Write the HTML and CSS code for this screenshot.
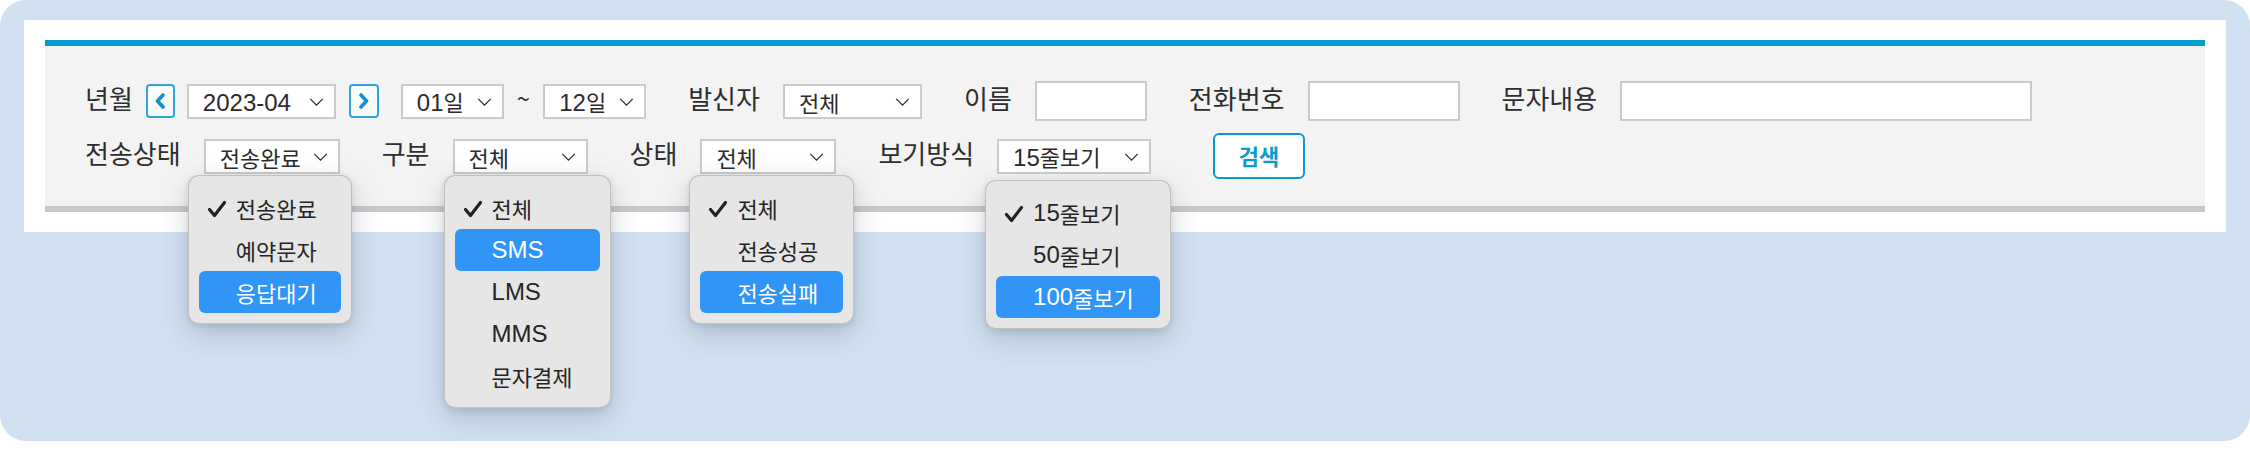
FILE: index.html
```html
<!DOCTYPE html>
<html lang="ko">
<head>
<meta charset="utf-8">
<title>문자 발송 내역 검색</title>
<link rel="stylesheet" href="styles.css">
</head>
<body>
<div class="frame">
  <div class="panel">
    <div class="search-box">
      <div class="row row-1">
        <span class="label label-first">년월</span>
        <button class="nav-btn nav-prev" type="button" aria-label="이전">
          <svg viewBox="0 0 12 16" width="12" height="16"><polyline points="9,2 3.5,8 9,14" fill="none" stroke="#1590c8" stroke-width="3.6" stroke-linecap="round" stroke-linejoin="round"/></svg>
        </button>
        <div class="select w-month"><span><span class="en">2023-04</span></span><svg class="chev" viewBox="0 0 16 9" width="15" height="8"><polyline points="1,1 8,8 15,1" fill="none" stroke="#333" stroke-width="1.5"/></svg></div>
        <button class="nav-btn nav-next" type="button" aria-label="다음">
          <svg viewBox="0 0 12 16" width="12" height="16"><polyline points="3,2 8.5,8 3,14" fill="none" stroke="#1590c8" stroke-width="3.6" stroke-linecap="round" stroke-linejoin="round"/></svg>
        </button>
        <div class="select w-day"><span><span class="en">01</span>일</span><svg class="chev" viewBox="0 0 16 9" width="15" height="8"><polyline points="1,1 8,8 15,1" fill="none" stroke="#333" stroke-width="1.5"/></svg></div>
        <span class="tilde">~</span>
        <div class="select w-day gap"><span><span class="en">12</span>일</span><svg class="chev" viewBox="0 0 16 9" width="15" height="8"><polyline points="1,1 8,8 15,1" fill="none" stroke="#333" stroke-width="1.5"/></svg></div>
        <span class="label">발신자</span>
        <div class="select w-sender gap"><span>전체</span><svg class="chev" viewBox="0 0 16 9" width="15" height="8"><polyline points="1,1 8,8 15,1" fill="none" stroke="#333" stroke-width="1.5"/></svg></div>
        <span class="label">이름</span>
        <div class="input w-name gap"></div>
        <span class="label">전화번호</span>
        <div class="input w-phone gap"></div>
        <span class="label">문자내용</span>
        <div class="input w-content"></div>
      </div>
      <div class="row row-2">
        <span class="label">전송상태</span>
        <div class="select w-status gap">
          <span>전송완료</span><svg class="chev" viewBox="0 0 16 9" width="15" height="8"><polyline points="1,1 8,8 15,1" fill="none" stroke="#333" stroke-width="1.5"/></svg>
          <ul class="menu menu-1">
            <li class="item checked"><svg class="check" viewBox="0 0 20 18" width="20" height="18"><polyline points="2.5,9.5 7.5,15.5 17.5,2.5" fill="none" stroke="#222" stroke-width="3.2" stroke-linecap="round" stroke-linejoin="round"/></svg>전송완료</li>
            <li class="item">예약문자</li>
            <li class="item active">응답대기</li>
          </ul>
        </div>
        <span class="label">구분</span>
        <div class="select w-type gap">
          <span>전체</span><svg class="chev" viewBox="0 0 16 9" width="15" height="8"><polyline points="1,1 8,8 15,1" fill="none" stroke="#333" stroke-width="1.5"/></svg>
          <ul class="menu menu-2">
            <li class="item checked"><svg class="check" viewBox="0 0 20 18" width="20" height="18"><polyline points="2.5,9.5 7.5,15.5 17.5,2.5" fill="none" stroke="#222" stroke-width="3.2" stroke-linecap="round" stroke-linejoin="round"/></svg>전체</li>
            <li class="item active"><span class="en">SMS</span></li>
            <li class="item"><span class="en">LMS</span></li>
            <li class="item"><span class="en">MMS</span></li>
            <li class="item">문자결제</li>
          </ul>
        </div>
        <span class="label">상태</span>
        <div class="select w-state gap">
          <span>전체</span><svg class="chev" viewBox="0 0 16 9" width="15" height="8"><polyline points="1,1 8,8 15,1" fill="none" stroke="#333" stroke-width="1.5"/></svg>
          <ul class="menu menu-3">
            <li class="item checked"><svg class="check" viewBox="0 0 20 18" width="20" height="18"><polyline points="2.5,9.5 7.5,15.5 17.5,2.5" fill="none" stroke="#222" stroke-width="3.2" stroke-linecap="round" stroke-linejoin="round"/></svg>전체</li>
            <li class="item">전송성공</li>
            <li class="item active">전송실패</li>
          </ul>
        </div>
        <span class="label">보기방식</span>
        <div class="select w-view gap-wide">
          <span><span class="en">15</span>줄보기</span><svg class="chev" viewBox="0 0 16 9" width="15" height="8"><polyline points="1,1 8,8 15,1" fill="none" stroke="#333" stroke-width="1.5"/></svg>
          <ul class="menu menu-4">
            <li class="item checked"><svg class="check" viewBox="0 0 20 18" width="20" height="18"><polyline points="2.5,9.5 7.5,15.5 17.5,2.5" fill="none" stroke="#222" stroke-width="3.2" stroke-linecap="round" stroke-linejoin="round"/></svg><span class="en">15</span>줄보기</li>
            <li class="item"><span class="en">50</span>줄보기</li>
            <li class="item active"><span class="en">100</span>줄보기</li>
          </ul>
        </div>
        <button class="search-btn" type="button">검색</button>
      </div>
    </div>
  </div>
</div>
</body>
</html>
```

FILE: styles.css
```css
* {
  box-sizing: border-box;
}

html, body {
  margin: 0;
  padding: 0;
  background: #ffffff;
}

body {
  font-family: "Noto Sans CJK KR", "Noto Sans", sans-serif;
  color: #2b2b2b;
}

.frame {
  width: 2250px;
  height: 441px;
  background: #d2e1f1;
  border-radius: 26px;
  padding: 20px 24px 0 24px;
}

.panel {
  width: 2202px;
  height: 212px;
  background: #ffffff;
  padding: 20px 21px;
}

.search-box {
  height: 172px;
  background: #f3f3f3;
  border-top: 6px solid #039cd0;
  border-bottom: 6px solid #c9c9c9;
  padding: 35px 40px 0 40px;
  display: flex;
  flex-direction: column;
  gap: 12px;
}

.row {
  display: flex;
  align-items: center;
}

.row-1 {
  height: 40px;
}

.row-2 {
  height: 46px;
}

.label {
  font-size: 26px;
  line-height: 32px;
  padding-bottom: 7px;
  margin-right: 23px;
  color: #2e2e2e;
  white-space: nowrap;
}

.label-first {
  margin-right: 13px;
}

.en {
  font-family: "Liberation Sans", "Noto Sans", sans-serif;
  font-size: 24px;
}

.nav-btn {
  width: 30px;
  height: 34px;
  padding: 0;
  border: 2px solid #2ea6dc;
  border-radius: 4px;
  background: linear-gradient(#ffffff, #f4f9fc);
  display: flex;
  align-items: center;
  justify-content: center;
}

.nav-prev {
  width: 29px;
  margin-right: 12px;
}

.nav-next {
  margin-left: 13px;
  margin-right: 22px;
}

.select {
  position: relative;
  height: 35px;
  background: #ffffff;
  border: 2px solid #cbcbcb;
  display: flex;
  align-items: center;
  justify-content: space-between;
  padding: 0 10px 0 14px;
  font-size: 22px;
  color: #2b2b2b;
  white-space: nowrap;
}

.select > span {
  line-height: 30px;
  padding-top: 2px;
}

.chev {
  flex: none;
  margin-top: 1px;
}

.w-month { width: 149px; }
.w-day { width: 103px; }
.w-sender { width: 139px; }
.w-status { width: 136px; }
.w-type { width: 135px; }
.w-state { width: 136px; }
.w-view { width: 154px; }

.gap { margin-right: 42px; }
.gap-wide { margin-right: 62px; }

.tilde {
  font-size: 24px;
  line-height: 30px;
  margin: 0 13px 6px 13px;
  color: #333;
}

.input {
  height: 40px;
  background: #ffffff;
  border: 2px solid #cbcbcb;
}

.w-name { width: 112px; }
.w-phone { width: 152px; }
.w-content { width: 412px; }

.search-btn {
  width: 92px;
  height: 46px;
  border: 2px solid #089bd1;
  border-radius: 6px;
  background: #ffffff;
  color: #089bd1;
  font-family: "Noto Sans CJK KR", sans-serif;
  font-size: 22px;
  font-weight: 700;
  padding: 0 0 2px 0;
}

/* dropdown popups */
.menu {
  position: absolute;
  top: calc(100% + 3px);
  list-style: none;
  margin: 0;
  padding: 11px 0 10px 0;
  background: #e6e6e6;
  border: 1px solid rgba(0, 0, 0, 0.16);
  border-radius: 11px;
  box-shadow: 0 10px 28px rgba(40, 60, 90, 0.22), 0 2px 6px rgba(0, 0, 0, 0.1);
  z-index: 10;
}

.menu-1 { left: -18px; width: 164px; }
.menu-2 { left: -11px; width: 167px; }
.menu-3 { left: -13px; width: 165px; }
.menu-4 { left: -14px; width: 186px; top: calc(100% + 8px); }

.item {
  position: relative;
  height: 42px;
  margin: 0 10px;
  padding: 0 12px 0 37px;
  border-radius: 6px;
  display: flex;
  align-items: center;
  font-size: 22px;
  color: #252525;
  line-height: 1;
  white-space: nowrap;
}

.item .en {
  line-height: 1;
}

.item.active {
  background: #3195f8;
  color: #ffffff;
}

.check {
  position: absolute;
  left: 8px;
  top: 13px;
}
```
